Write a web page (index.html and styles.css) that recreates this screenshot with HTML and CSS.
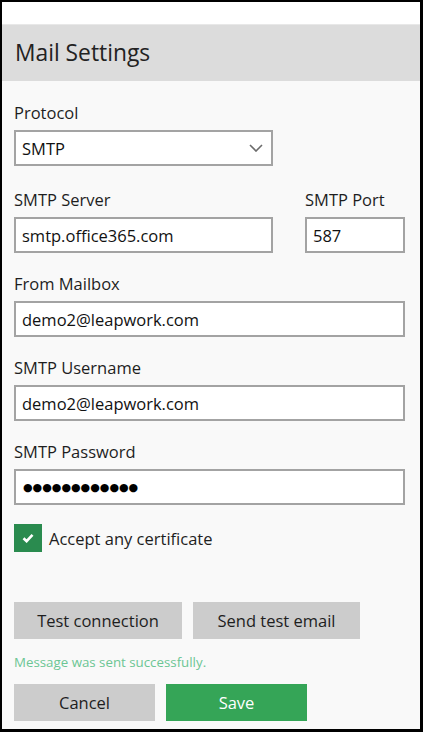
FILE: index.html
```html
<!DOCTYPE html>
<html lang="en">
<head>
<meta charset="utf-8">
<title>Mail Settings</title>
<link rel="stylesheet" href="styles.css">
</head>
<body>
<div class="frame">
  <div class="topbar"></div>
  <header class="header"><h1 class="title">Mail Settings</h1></header>
  <main class="content">
    <div class="field field-first">
      <label class="label">Protocol</label>
      <div class="select">
        <span class="value">SMTP</span>
        <svg class="chevron" width="14" height="8" viewBox="0 0 14 8"><path d="M1 1 L7 7 L13 1" fill="none" stroke="#6b6b6b" stroke-width="1.6"/></svg>
      </div>
    </div>
    <div class="row">
      <div class="field">
        <label class="label">SMTP Server</label>
        <div class="input w-server"><span class="value">smtp.office365.com</span></div>
      </div>
      <div class="field">
        <label class="label">SMTP Port</label>
        <div class="input w-port"><span class="value">587</span></div>
      </div>
    </div>
    <div class="field">
      <label class="label">From Mailbox</label>
      <div class="input w-full"><span class="value">demo2@leapwork.com</span></div>
    </div>
    <div class="field">
      <label class="label">SMTP Username</label>
      <div class="input w-full"><span class="value">demo2@leapwork.com</span></div>
    </div>
    <div class="field field-last">
      <label class="label">SMTP Password</label>
      <div class="input w-full"><span class="dots">●●●●●●●●●●●●</span></div>
    </div>
    <div class="check">
      <span class="box"><svg width="12" height="10" viewBox="0 0 12 10"><path d="M1.5 5.2 L4.6 8.2 L10.5 1.8" fill="none" stroke="#fff" stroke-width="2.6"/></svg></span>
      <span class="check-text">Accept any certificate</span>
    </div>
    <div class="buttons buttons-test">
      <button class="btn btn-test">Test connection</button>
      <button class="btn btn-send">Send test email</button>
    </div>
    <p class="msg">Message was sent successfully.</p>
    <div class="buttons">
      <button class="btn btn-cancel">Cancel</button>
      <button class="btn btn-save">Save</button>
    </div>
  </main>
</div>
</body>
</html>
```

FILE: styles.css
```css
html, body {
  margin: 0;
  padding: 0;
  background: #ffffff;
}
body {
  font-family: "Open Sans", "Noto Sans", sans-serif;
  color: #1e1e1e;
}
.frame {
  width: 423px;
  height: 732px;
  box-sizing: border-box;
  border-top: 2px solid #000;
  border-left: 2px solid #000;
  border-right: 3px solid #000;
  border-bottom: 3px solid #000;
  background: #f9f9f9;
  display: flex;
  flex-direction: column;
}
.topbar {
  height: 22px;
  background: #ffffff;
}
.header {
  height: 56px;
  background: #dcdcdc;
  border-top: 1px solid #e8e8e8;
  display: flex;
  align-items: center;
  padding-left: 13px;
}
.title {
  margin: 0;
  font-size: 22.8px;
  font-weight: 400;
  color: #222;
  line-height: 28px;
}
.content {
  padding: 21px 0 0 12px;
}
.field {
  display: flex;
  flex-direction: column;
  margin-bottom: 20px;
}
.field-first { margin-bottom: 23px; }
.field-last { margin-bottom: 19px; }
.label {
  font-size: 16.5px;
  line-height: 22px;
  height: 22px;
  margin-bottom: 6px;
  color: #1e1e1e;
}
.row {
  display: flex;
  gap: 32px;
}
.select, .input {
  box-sizing: border-box;
  height: 36px;
  border: 2px solid #a3a3a3;
  background: #fff;
  display: flex;
  align-items: center;
  padding: 0 6px;
}
.select {
  width: 259px;
  justify-content: space-between;
  padding-right: 8px;
}
.w-server { width: 259px; }
.w-port { width: 100px; }
.w-full { width: 391px; }
.value {
  font-size: 16.5px;
  color: #111;
}
.dots {
  font-family: "DejaVu Sans", sans-serif;
  font-size: 11px;
  letter-spacing: 0;
  color: #000;
  padding-left: 1px;
}
.check {
  display: flex;
  align-items: center;
  gap: 7px;
  height: 28px;
}
.box {
  width: 28px;
  height: 28px;
  background: #2a8b4f;
  display: flex;
  align-items: center;
  justify-content: center;
}
.check-text {
  font-size: 16.5px;
  color: #1e1e1e;
}
.buttons {
  display: flex;
  gap: 11px;
}
.buttons-test {
  margin-top: 50px;
}
.btn {
  height: 37px;
  border: none;
  margin: 0;
  padding: 0;
  font-family: "Open Sans", "Noto Sans", sans-serif;
  font-size: 16.5px;
  color: #1e1e1e;
  background: #cccccc;
}
.btn-test { width: 168px; }
.btn-send { width: 167px; }
.btn-cancel { width: 141px; }
.btn-save {
  width: 141px;
  background: #35a557;
  color: #fff;
}
.msg {
  margin: 14px 0 13px;
  font-size: 13.3px;
  line-height: 18px;
  color: #6cc694;
}
```
